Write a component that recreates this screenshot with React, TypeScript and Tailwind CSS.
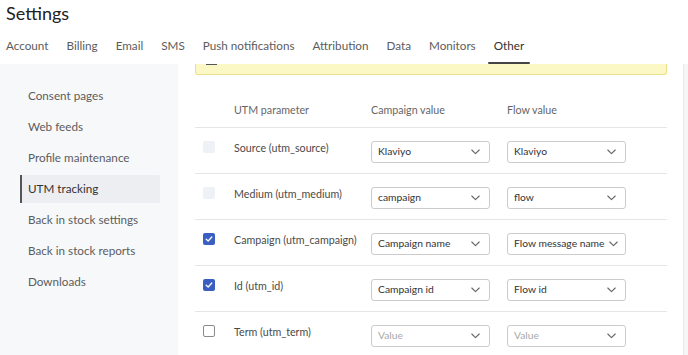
import React from 'react';

const tabs = ['Account', 'Billing', 'Email', 'SMS', 'Push notifications', 'Attribution', 'Data', 'Monitors', 'Other'];
const navItems = ['Consent pages', 'Web feeds', 'Profile maintenance', 'UTM tracking', 'Back in stock settings', 'Back in stock reports', 'Downloads'];

type CheckState = 'disabled' | 'checked' | 'empty';

interface Row {
  label: string;
  check: CheckState;
  campaign: string;
  flow: string;
}

const rows: Row[] = [
  { label: 'Source (utm_source)', check: 'disabled', campaign: 'Klaviyo', flow: 'Klaviyo' },
  { label: 'Medium (utm_medium)', check: 'disabled', campaign: 'campaign', flow: 'flow' },
  { label: 'Campaign (utm_campaign)', check: 'checked', campaign: 'Campaign name', flow: 'Flow message name' },
  { label: 'Id (utm_id)', check: 'checked', campaign: 'Campaign id', flow: 'Flow id' },
  { label: 'Term (utm_term)', check: 'empty', campaign: '', flow: '' },
];

const Checkbox: React.FC<{ state: CheckState }> = ({ state }) => {
  if (state === 'checked') {
    return (
      <div className="w-[12px] h-[12px] rounded-[2px] bg-[#3a5ec2] flex items-center justify-center">
        <svg width="8" height="8" viewBox="0 0 10 10" fill="none">
          <path d="M1.5 5.2 L4 7.5 L8.5 2.5" stroke="white" strokeWidth="1.6" strokeLinecap="round" strokeLinejoin="round" />
        </svg>
      </div>
    );
  }
  if (state === 'disabled') {
    return <div className="w-[12px] h-[12px] rounded-[2px] bg-[#eef1f5]" />;
  }
  return <div className="w-[12px] h-[12px] rounded-[2px] border border-[#8a8a8a] bg-white" />;
};

const Select: React.FC<{ value: string }> = ({ value }) => (
  <div className="w-[119px] h-[22px] border border-[#cbcbcb] rounded-[3px] bg-white flex items-center justify-between gap-[4px] pl-[6px] pr-[9px]">
    <span className={value ? 'whitespace-nowrap text-[#333] text-[10.3px]' : 'whitespace-nowrap text-[#a8a8a8] text-[10.3px]'}>{value || 'Value'}</span>
    <svg width="9" height="6" viewBox="0 0 9 6" fill="none" className="shrink-0">
      <path d="M0.8 1 L4.5 4.7 L8.2 1" stroke="#666" strokeWidth="1.1" strokeLinecap="round" strokeLinejoin="round" />
    </svg>
  </div>
);

export default function App() {
  return (
    <div className="w-[688px] h-[355px] overflow-hidden bg-white flex flex-col" style={{ fontFamily: 'Lato, sans-serif' }}>
      <header className="h-[64px] shrink-0 px-[6px]">
        <h1 className="text-[18px] leading-[26px] text-[#222]">Settings</h1>
        <nav className="flex gap-[18px] h-[38px]">
          {tabs.map((t) => (
            <div
              key={t}
              className={
                t === 'Other'
                  ? 'relative flex items-start pt-[11px] text-[11.7px] text-[#333] after:absolute after:-left-[6px] after:-right-[6px] after:bottom-0 after:h-[2px] after:bg-[#444] after:rounded-sm'
                  : 'flex items-start pt-[11px] text-[11.7px] text-[#5c5c5c]'
              }
            >
              {t}
            </div>
          ))}
        </nav>
      </header>
      <div className="flex flex-1 min-h-0">
        <aside className="w-[178px] shrink-0 bg-[#f7f8fa] pl-[20px] pr-[18px] pt-[18px] flex flex-col gap-[3px]">
          {navItems.map((n) => (
            <div
              key={n}
              className={
                n === 'UTM tracking'
                  ? 'h-[28px] flex items-center pl-[6px] text-[11.7px] text-[#333] bg-[#eceef1] border-l-[2px] border-[#555] rounded-r-[2px]'
                  : 'h-[28px] flex items-center pl-[8px] text-[11.7px] text-[#5c5c5c]'
              }
            >
              {n}
            </div>
          ))}
        </aside>
        <main className="flex-1 pl-[17px] pr-[16px]">
          <div className="h-[11px] bg-[#fcf8c6] border border-t-0 border-[#ece08c] rounded-b-[3px] relative">
            <div className="absolute left-[10px] top-[0px] w-[11px] h-[1px] bg-[#555]" />
          </div>
          <div className="mt-[18px] h-[35px] flex items-center border-b border-[#e6e6e6] text-[10.7px] text-[#666]">
            <div className="w-[39px] shrink-0" />
            <div className="w-[137px] shrink-0">UTM parameter</div>
            <div className="w-[136px] shrink-0">Campaign value</div>
            <div>Flow value</div>
          </div>
          {rows.map((r) => (
            <div key={r.label} className="h-[46px] flex items-start pt-[13px] border-b border-[#e6e6e6]">
              <div className="w-[39px] shrink-0 pl-[8px]">
                <Checkbox state={r.check} />
              </div>
              <div className="w-[137px] shrink-0 whitespace-nowrap text-[10.7px] leading-[13px] text-[#4a4a4a]">{r.label}</div>
              <div className="w-[136px] shrink-0">
                <Select value={r.campaign} />
              </div>
              <div>
                <Select value={r.flow} />
              </div>
            </div>
          ))}
        </main>
        <div className="w-[5px] shrink-0 bg-[#f5f6f8] border-l border-[#e8e9ec]" />
      </div>
    </div>
  );
}
